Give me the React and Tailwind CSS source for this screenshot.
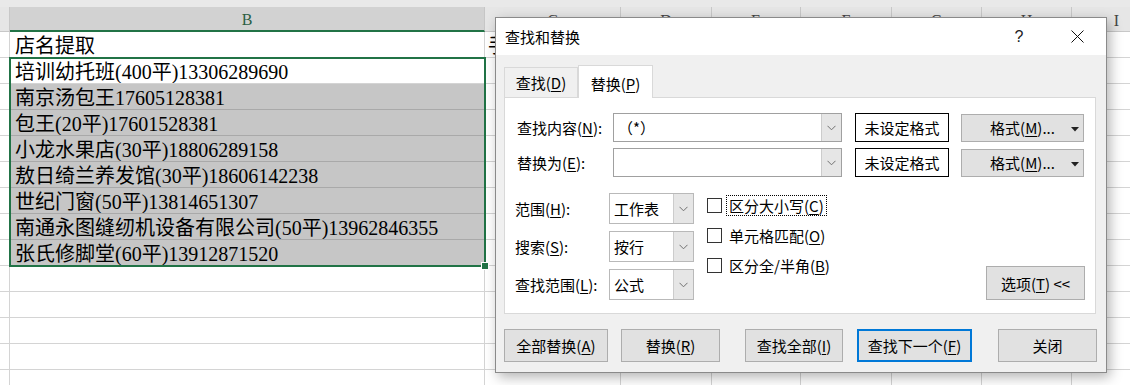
import React from "react";

const W = ["w-[10px]", "w-[475px]", "w-[136px]", "w-[91px]", "w-[89px]", "w-[91px]", "w-[90px]", "w-[90px]", "w-[90px]"];
const LETTERS = ["", "B", "C", "D", "E", "F", "G", "H", "I"];
const DATA = [
  "店名提取",
  "培训幼托班(400平)13306289690",
  "南京汤包王17605128381",
  "包王(20平)17601528381",
  "小龙水果店(30平)18806289158",
  "敖日绮兰养发馆(30平)18606142238",
  "世纪门窗(50平)13814651307",
  "南通永图缝纫机设备有限公司(50平)13962846355",
  "张氏修脚堂(60平)13912871520",
];
const ROWS = Array.from({ length: 14 }, (_, i) => i);
const COLS = [0, 1, 2, 3, 4, 5, 6, 7, 8];

function HeaderCell({ i }) {
  if (i === 1) {
    return (
      <div className={`${W[i]} shrink-0 h-full bg-[#d2d2d2] border-r border-[#c6c6c6] border-b-2 border-b-[#217346] flex items-center justify-center pt-[3px] text-[#2b5f45]`}>
        {LETTERS[i]}
      </div>
    );
  }
  return (
    <div className={`${W[i]} shrink-0 h-full bg-[#e6e6e6] border-r border-b border-[#c8c8c8] flex items-center justify-center pt-[3px] text-[#444]`}>
      {LETTERS[i]}
    </div>
  );
}

function Cell({ r, i }) {
  const text = i === 1 ? DATA[r] : null;
  const selectedGray = i === 1 && r >= 2 && r <= 8;
  if (selectedGray) {
    return (
      <div className={`${W[i]} shrink-0 h-full bg-[#c6c6c6] border-r border-[#c6c6c6] border-b border-b-[#a9a9a9] flex items-center pl-[5px] pt-[3px] whitespace-nowrap overflow-hidden`}>
        {text}
      </div>
    );
  }
  if (i === 2 && r === 0) {
    return (
      <div className={`${W[i]} shrink-0 h-full bg-white border-r border-b border-[#d4d4d4] flex items-center pl-[3px] pt-[3px] whitespace-nowrap`}>
        <div className="w-[8px] overflow-hidden">手</div>
      </div>
    );
  }
  return (
    <div className={`${W[i]} shrink-0 h-full bg-white border-r border-b border-[#d4d4d4] flex items-center pl-[5px] pt-[3px] whitespace-nowrap overflow-hidden`}>
      {text}
    </div>
  );
}

function Chevron() {
  return (
    <svg width="9" height="6" viewBox="0 0 9 6">
      <polyline points="0.5,0.8 4.5,4.8 8.5,0.8" fill="none" stroke="#707070" strokeWidth="1" />
    </svg>
  );
}

function U({ children }) {
  return <span className="underline underline-offset-[2px] decoration-1">{children}</span>;
}

function Select({ text }) {
  return (
    <div className="w-[85px] h-[31px] border border-[#b9b9b9] bg-white flex">
      <div className="flex-1 flex items-center pl-[4px]">{text}</div>
      <div className="w-[20px] h-full bg-[#e6e6e6] border-l border-[#cccccc] flex items-center justify-center">
        <Chevron />
      </div>
    </div>
  );
}

function Combo({ text }) {
  return (
    <div className="w-[229px] h-[29px] border border-[#a0a0a0] bg-white flex">
      <div className="flex-1 flex items-center pl-[4px]">{text}</div>
      <div className="w-[20px] h-full bg-[#e6e6e6] border-l border-[#cccccc] flex items-center justify-center">
        <Chevron />
      </div>
    </div>
  );
}

function FormatButton() {
  return (
    <div className="ml-[12px] w-[123px] h-[28px] bg-[#e1e1e1] border border-[#adadad] relative flex items-center justify-center">
      <span>格式(<U>M</U>)...</span>
      <svg className="absolute right-[4px] top-[12px]" width="8" height="5" viewBox="0 0 8 5">
        <polygon points="0,0 8,0 4,4.5" fill="#222" />
      </svg>
    </div>
  );
}

function Check({ children, focused }) {
  return (
    <div className="h-[24px] flex items-center">
      <div className="w-[15px] h-[15px] border border-[#333] bg-white" />
      <div className={`ml-[4px] px-[2px] h-[21px] flex items-center border ${focused ? "border-dotted border-black" : "border-transparent"}`}>
        {children}
      </div>
    </div>
  );
}

function Btn({ w, ml, children, def }) {
  return (
    <div
      className={`${w} ${ml} h-[33px] bg-[#e1e1e1] flex items-center justify-center ${def ? "border-2 border-[#0078d7]" : "border border-[#adadad]"}`}
    >
      {children}
    </div>
  );
}

export default function App() {
  return (
    <div className="relative w-[1130px] h-[385px] overflow-hidden bg-white">
      {/* Spreadsheet */}
      <div className="font-['Liberation_Serif','Noto_Sans_CJK_SC',serif] text-black">
        <div className="h-[7px] bg-[#e9e9e9]" />
        <div className="flex h-[25px] text-[16px]">
          {COLS.map((i) => (
            <HeaderCell key={i} i={i} />
          ))}
        </div>
        <div className="text-[20px] leading-none">
          {ROWS.map((r) => (
            <div key={r} className="flex h-[26px]">
              {COLS.map((i) => (
                <Cell key={i} r={r} i={i} />
              ))}
            </div>
          ))}
        </div>
      </div>

      {/* selection outline */}
      <div className="absolute left-[9px] top-[57px] w-[477px] h-[210px] border-2 border-[#217346]" />
      <div className="absolute left-[481px] top-[262px] w-[8px] h-[8px] bg-[#217346] border border-white" />

      {/* Dialog */}
      <div className="absolute left-[495px] top-[17px] w-[612px] h-[356px] border border-[#8a8a8a] bg-[#f0f0f0] shadow-[3px_4px_12px_rgba(0,0,0,0.3)] flex flex-col font-['Noto_Sans_CJK_SC',sans-serif] text-[15px] leading-none text-black">
        <div className="h-[37px] bg-white flex items-center shrink-0">
          <div className="pl-[9px] flex-1">查找和替换</div>
          <div className="w-[58px] h-full flex items-center justify-center font-['Liberation_Sans',sans-serif] text-[16px] text-[#222]">?</div>
          <div className="w-[58px] h-full flex items-center justify-center">
            <svg width="13" height="13" viewBox="0 0 13 13">
              <line x1="0.5" y1="0.5" x2="12.5" y2="12.5" stroke="#111" strokeWidth="1" />
              <line x1="12.5" y1="0.5" x2="0.5" y2="12.5" stroke="#111" strokeWidth="1" />
            </svg>
          </div>
        </div>

        <div className="h-[42px] flex items-end pl-[8px] shrink-0">
          <div className="w-[74px] h-[30px] border border-b-0 border-[#d9d9d9] flex items-center justify-center">
            查找(<U>D</U>)
          </div>
          <div className="w-[75px] h-[33px] -mb-px relative z-10 border border-b-0 border-[#d9d9d9] bg-white flex items-center justify-center pt-[2px]">
            替换(<U>P</U>)
          </div>
        </div>

        <div className="ml-[8px] w-[592px] h-[217px] border border-[#d9d9d9] bg-white shrink-0 flex flex-col pt-[15px]">
          <div className="flex items-center h-[29px]">
            <div className="w-[108px] pl-[12px]">查找内容(<U>N</U>):</div>
            <Combo text="（*）" />
            <div className="ml-[13px] w-[94px] h-[29px] border border-black flex items-center justify-center">未设定格式</div>
            <FormatButton />
          </div>
          <div className="flex items-center h-[29px] mt-[6px]">
            <div className="w-[108px] pl-[12px]">替换为(<U>E</U>):</div>
            <Combo text="" />
            <div className="ml-[13px] w-[94px] h-[29px] border border-black flex items-center justify-center">未设定格式</div>
            <FormatButton />
          </div>

          <div className="flex items-start mt-[16px]">
            <div className="flex flex-col gap-[7px]">
              <div className="flex items-center h-[31px]">
                <div className="w-[104px] pl-[10px]">范围(<U>H</U>):</div>
                <Select text="工作表" />
              </div>
              <div className="flex items-center h-[31px]">
                <div className="w-[104px] pl-[10px]">搜索(<U>S</U>):</div>
                <Select text="按行" />
              </div>
              <div className="flex items-center h-[31px]">
                <div className="w-[104px] pl-[10px]">查找范围(<U>L</U>):</div>
                <Select text="公式" />
              </div>
            </div>
            <div className="ml-[13px] flex flex-col gap-[6px]">
              <Check focused>区分大小写(<U>C</U>)</Check>
              <Check>单元格匹配(<U>O</U>)</Check>
              <Check>区分全/半角(<U>B</U>)</Check>
            </div>
            <div className="ml-auto mr-[10px] mt-[73px] w-[99px] h-[34px] bg-[#e1e1e1] border border-[#adadad] flex items-center justify-center">
              选项(<U>T</U>)&nbsp;&lt;&lt;
            </div>
          </div>
        </div>

        <div className="mt-[15px] ml-[8px] flex shrink-0">
          <Btn w="w-[104px]" ml="ml-0">全部替换(<U>A</U>)</Btn>
          <Btn w="w-[99px]" ml="ml-[13px]">替换(<U>R</U>)</Btn>
          <Btn w="w-[98px]" ml="ml-[25px]">查找全部(<U>I</U>)</Btn>
          <Btn w="w-[115px]" ml="ml-[14px]" def>查找下一个(<U>F</U>)</Btn>
          <Btn w="w-[99px]" ml="ml-[26px]">关闭</Btn>
        </div>
      </div>
    </div>
  );
}
